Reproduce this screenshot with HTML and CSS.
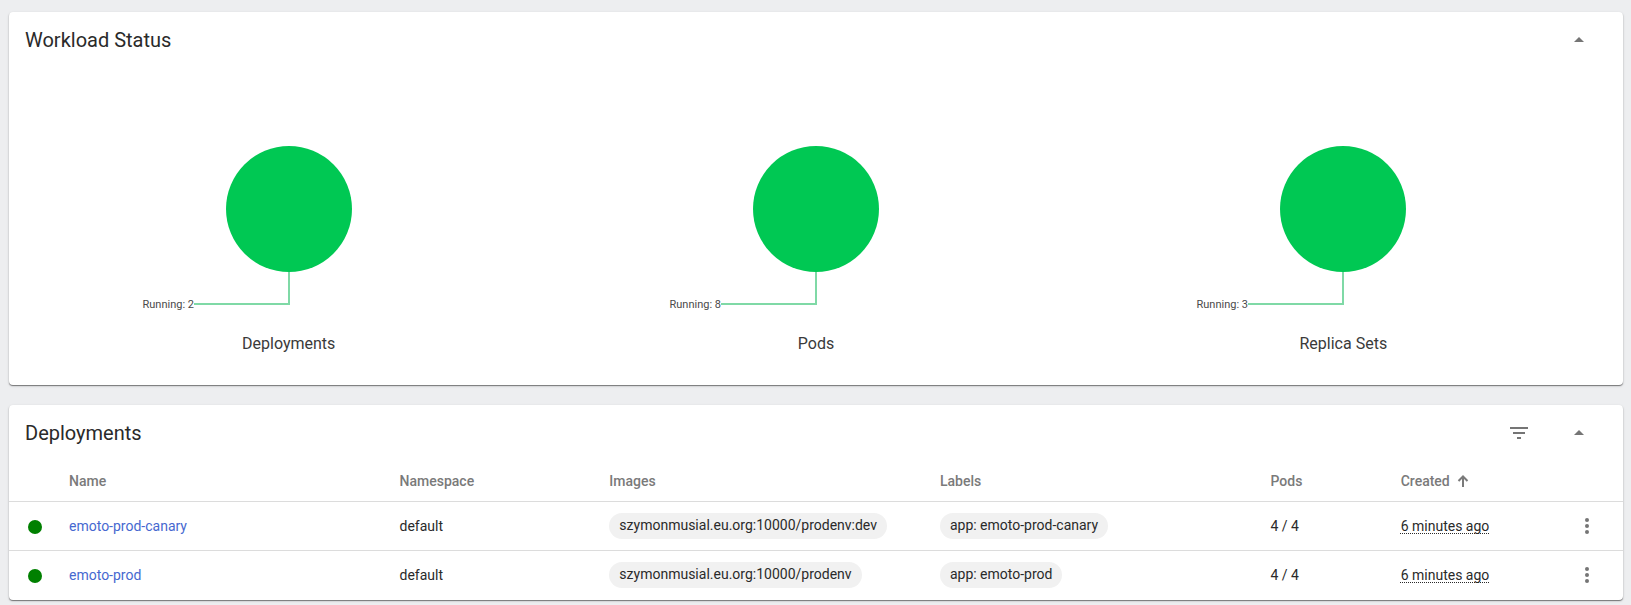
FILE: index.html
```html
<!DOCTYPE html>
<html lang="en">
<head>
<meta charset="utf-8">
<title>Workloads</title>
<link rel="stylesheet" href="styles.css">
</head>
<body>
<main class="page">
  <section class="card">
    <header class="card-header">
      <h2 class="card-title">Workload Status</h2>
      <button class="icon-button" type="button" aria-label="Collapse workload status">
        <svg class="icon" viewBox="0 0 24 24"><path d="M7 14l5-5 5 5z"/></svg>
      </button>
    </header>
    <div class="charts">
      <figure class="chart">
        <svg class="chart-pie" viewBox="0 0 320 180" role="img" aria-label="Deployments running: 2">
          <circle class="pie" cx="160" cy="67" r="63"/>
          <path class="leader" d="M160 130V162H65"/>
          <text class="chart-label" x="65" y="166">Running: 2</text>
        </svg>
        <figcaption class="chart-name">Deployments</figcaption>
      </figure>
      <figure class="chart">
        <svg class="chart-pie" viewBox="0 0 320 180" role="img" aria-label="Pods running: 8">
          <circle class="pie" cx="160" cy="67" r="63"/>
          <path class="leader" d="M160 130V162H65"/>
          <text class="chart-label" x="65" y="166">Running: 8</text>
        </svg>
        <figcaption class="chart-name">Pods</figcaption>
      </figure>
      <figure class="chart">
        <svg class="chart-pie" viewBox="0 0 320 180" role="img" aria-label="Replica sets running: 3">
          <circle class="pie" cx="160" cy="67" r="63"/>
          <path class="leader" d="M160 130V162H65"/>
          <text class="chart-label" x="65" y="166">Running: 3</text>
        </svg>
        <figcaption class="chart-name">Replica Sets</figcaption>
      </figure>
    </div>
  </section>

  <section class="card">
    <header class="card-header">
      <h2 class="card-title">Deployments</h2>
      <div class="card-actions">
        <button class="icon-button" type="button" aria-label="Filter">
          <svg class="icon" viewBox="0 0 24 24"><path d="M10 18h4v-2h-4v2zM3 6v2h18V6H3zm3 7h12v-2H6v2z"/></svg>
        </button>
        <button class="icon-button" type="button" aria-label="Collapse deployments">
          <svg class="icon" viewBox="0 0 24 24"><path d="M7 14l5-5 5 5z"/></svg>
        </button>
      </div>
    </header>
    <table class="table">
      <colgroup>
        <col class="col-status"><col class="col-wide"><col class="col-namespace"><col class="col-wide"><col class="col-wide"><col class="col-pods"><col><col class="col-menu">
      </colgroup>
      <thead>
        <tr>
          <th aria-label="Status"></th>
          <th>Name</th>
          <th>Namespace</th>
          <th>Images</th>
          <th>Labels</th>
          <th>Pods</th>
          <th aria-sort="ascending"><button class="sort" type="button">Created
            <svg class="sort-arrow" viewBox="0 0 12 12"><path d="M6 12V1.500M1.500 6L6 1.500L10.500 6"/></svg></button></th>
          <th aria-label="Actions"></th>
        </tr>
      </thead>
      <tbody>
        <tr>
          <td class="status"><svg class="dot" viewBox="0 0 14 14" role="img" aria-label="Running"><circle cx="7" cy="7" r="7"/></svg></td>
          <td><a class="link" href="#emoto-prod-canary">emoto-prod-canary</a></td>
          <td>default</td>
          <td><span class="chip">szymonmusial.eu.org:10000/prodenv:dev</span></td>
          <td><span class="chip">app: emoto-prod-canary</span></td>
          <td>4 / 4</td>
          <td><span class="time">6 minutes ago</span></td>
          <td><button class="icon-button menu" type="button" aria-label="Actions for emoto-prod-canary">
            <svg class="icon" viewBox="0 0 24 24"><circle cx="12" cy="6" r="2"/><circle cx="12" cy="12" r="2"/><circle cx="12" cy="18" r="2"/></svg></button></td>
        </tr>
        <tr>
          <td class="status"><svg class="dot" viewBox="0 0 14 14" role="img" aria-label="Running"><circle cx="7" cy="7" r="7"/></svg></td>
          <td><a class="link" href="#emoto-prod">emoto-prod</a></td>
          <td>default</td>
          <td><span class="chip">szymonmusial.eu.org:10000/prodenv</span></td>
          <td><span class="chip">app: emoto-prod</span></td>
          <td>4 / 4</td>
          <td><span class="time">6 minutes ago</span></td>
          <td><button class="icon-button menu" type="button" aria-label="Actions for emoto-prod">
            <svg class="icon" viewBox="0 0 24 24"><circle cx="12" cy="6" r="2"/><circle cx="12" cy="12" r="2"/><circle cx="12" cy="18" r="2"/></svg></button></td>
        </tr>
      </tbody>
    </table>
  </section>
</main>
</body>
</html>
```

FILE: styles.css
```css
* {
  box-sizing: border-box;
}

body {
  margin: 0;
  background: #edeef0;
  color: #2a2a2a;
  font: 14px/20px Roboto, sans-serif;
}

.page {
  display: flex;
  flex-direction: column;
  gap: 20px;
  padding: 12px 8px 4px 9px;
}

.card {
  background: #fff;
  border-radius: 4px;
  box-shadow: 0 1px 1px rgba(0, 0, 0, 0.45), 0 1px 3px rgba(0, 0, 0, 0.14);
}

.card-header {
  display: flex;
  align-items: center;
  justify-content: space-between;
  height: 56px;
  padding: 0 24px 0 16px;
}

.card-title {
  margin: 0;
  font-size: 20px;
  line-height: 28px;
  font-weight: 400;
}

.card-actions {
  display: flex;
  gap: 20px;
}

.icon-button {
  display: grid;
  place-items: center;
  width: 40px;
  height: 40px;
  padding: 0;
  border: 0;
  background: none;
  color: #757575;
  cursor: pointer;
}

.icon {
  width: 24px;
  height: 24px;
  fill: currentColor;
}

.charts {
  display: grid;
  grid-template-columns: repeat(3, 1fr);
  padding: 74px 16px 29px;
}

.chart {
  display: flex;
  flex-direction: column;
  align-items: center;
  gap: 10px;
  margin: 0;
}

.chart-pie {
  width: 320px;
  height: 180px;
}

.pie {
  fill: #00c853;
}

.leader {
  fill: none;
  stroke: #7fd9a6;
  stroke-width: 2;
}

.chart-label {
  fill: #4a4a4a;
  font-size: 11px;
  text-anchor: end;
}

.chart-name {
  color: #3a3a3a;
  font-size: 16px;
  line-height: 24px;
}

.table {
  width: 100%;
  border-collapse: separate;
  border-spacing: 0;
  table-layout: fixed;
}

.col-status {
  width: 60px;
}

.col-wide {
  width: 20.48%;
}

.col-namespace {
  width: 13%;
}

.col-pods {
  width: 8.07%;
}

.col-menu {
  width: 56px;
}

.table th,
.table td {
  padding: 0;
  text-align: left;
  vertical-align: middle;
  white-space: nowrap;
}

.table th {
  height: 41px;
  border-bottom: 1px solid #dcdcdc;
  color: #7a7a7a;
  font-weight: 500;
}

.table td {
  height: 49px;
  border-bottom: 1px solid #dcdcdc;
}

.table tr:last-child td {
  border-bottom-color: transparent;
}

.table .status {
  padding: 2px 0 0 19px;
}

.dot {
  display: block;
  width: 14px;
  height: 14px;
  fill: #008000;
}

.link {
  color: #4668d0;
  text-decoration: none;
}

.chip {
  display: inline-block;
  height: 26px;
  padding: 0 10px;
  border-radius: 13px;
  background: #f1f1f1;
  line-height: 25px;
}

.time {
  text-decoration: underline dotted 1px;
  text-decoration-skip-ink: none;
  text-underline-offset: 2px;
}

.sort {
  display: flex;
  align-items: center;
  gap: 7px;
  padding: 0;
  border: 0;
  background: none;
  color: inherit;
  font: inherit;
  cursor: pointer;
}

.sort-arrow {
  width: 12px;
  height: 12px;
  fill: none;
  stroke: currentColor;
  stroke-width: 2;
}

.menu {
  height: 32px;
}
```
